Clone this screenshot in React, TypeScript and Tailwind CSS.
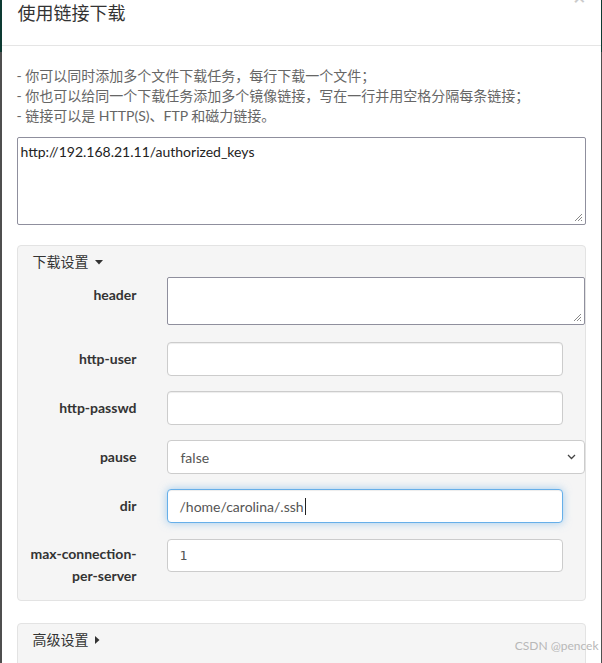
import React from "react";

const font = { fontFamily: "Lato, 'Noto Sans CJK SC', sans-serif" };

function Resize() {
  return (
    <svg width="9" height="9" viewBox="0 0 9 9" className="absolute bottom-[2px] right-[2px]">
      <path d="M8 1L1 8M8 4L4 8M8 7L7 8" stroke="#888" strokeWidth="1" />
    </svg>
  );
}

function Row({ label, children, pt = "pt-[7px]" }: { label: React.ReactNode; children: React.ReactNode; pt?: string }) {
  return (
    <div className="flex items-start">
      <label className={`w-[123px] shrink-0 pr-[15px] text-right text-[14px] font-bold leading-[20px] text-[#333] ${pt}`}>
        {label}
      </label>
      <div className="ml-[15px]">{children}</div>
    </div>
  );
}

const inputCls =
  "h-[34px] w-[396px] rounded-[4px] border border-[#ccc] bg-white px-[12px] text-[14px] text-[#555] shadow-[inset_0_1px_1px_rgba(0,0,0,0.075)] outline-none";

export default function App() {
  return (
    <div className="flex h-[663px] w-[602px] overflow-hidden bg-[#595959]" style={font}>
      <div className="flex w-[2px] flex-col">
        <div className="h-[52px] bg-[#0d3a32]" />
        <div className="flex-1 bg-[#4f4f4f]" />
      </div>

      <div className="relative flex-1 bg-white">
        <span className="absolute right-[15px] top-[-13px] text-[21px] font-bold leading-[20px] text-[#000] opacity-20">×</span>

        <div className="h-[46px] border-b border-[#e5e5e5] pl-[16px] pt-[1px]">
          <h4 className="text-[18px] leading-[24px] text-[#333]">使用链接下载</h4>
        </div>

        <div className="px-[15px] pt-[20px]">
          <div className="text-[14px] leading-[20px] text-[#666]">
            <p>- 你可以同时添加多个文件下载任务，每行下载一个文件；</p>
            <p>- 你也可以给同一个下载任务添加多个镜像链接，写在一行并用空格分隔每条链接；</p>
            <p>- 链接可以是 HTTP(S)、FTP 和磁力链接。</p>
          </div>

          <div className="relative mt-[11px] h-[88px] rounded-[2px] border border-[#8f8f9d] bg-white px-[3px] pt-[4px] text-[14px] leading-[20px] text-[#222]">
            http://192.168.21.11/authorized_keys
            <Resize />
          </div>

          <div className="mt-[20px] h-[356px] rounded-[4px] border border-[#e3e3e3] bg-[#f5f5f5] pl-[11px] pt-[6px]">
            <div className="flex items-center gap-[6px] pl-[4px] text-[14px] leading-[20px] text-[#333]">
              下载设置
              <svg width="8" height="5" viewBox="0 0 8 5">
                <path d="M0 0H8L4 4.5Z" fill="#333" />
              </svg>
            </div>

            <div className="mt-[5px] flex flex-col">
              <Row label="header" pt="pt-[8px]">
                <div className="relative h-[48px] w-[418px] rounded-[2px] border border-[#8f8f9d] bg-white">
                  <Resize />
                </div>
              </Row>
              <div className="mt-[17px]">
                <Row label="http-user">
                  <div className={inputCls} />
                </Row>
              </div>
              <div className="mt-[15px]">
                <Row label="http-passwd">
                  <div className={inputCls} />
                </Row>
              </div>
              <div className="mt-[15px]">
                <Row label="pause">
                  <div className="flex h-[34px] w-[418px] items-center justify-between rounded-[4px] border border-[#ccc] bg-white pl-[13px] pr-[8px] text-[14px] text-[#555]">
                    false
                    <svg width="9" height="6" viewBox="0 0 9 6">
                      <path d="M1 1L4.5 4.5L8 1" stroke="#444" strokeWidth="1.3" fill="none" />
                    </svg>
                  </div>
                </Row>
              </div>
              <div className="mt-[15px]">
                <Row label="dir">
                  <div className="flex h-[34px] w-[396px] items-center rounded-[4px] border border-[#66afe9] bg-white px-[12px] text-[14px] text-[#555] shadow-[inset_0_1px_1px_rgba(0,0,0,0.075),0_0_8px_rgba(102,175,233,0.6)]">
                    /home/carolina/.ssh
                    <span className="ml-[1px] h-[17px] w-px bg-[#222]" />
                  </div>
                </Row>
              </div>
              <div className="mt-[16px]">
                <Row
                  label={
                    <>
                      max-connection-
                      <br />
                      per-server
                    </>
                  }
                  pt="pt-[4px] leading-[22px]"
                >
                  <div className="flex h-[33px] w-[396px] items-center rounded-[4px] border border-[#ccc] bg-white px-[12px] text-[14px] text-[#555]">
                    <span style={{ fontFamily: "'DejaVu Sans Mono', monospace" }} className="text-[13px]">1</span>
                  </div>
                </Row>
              </div>
            </div>
          </div>

          <div className="mt-[22px] h-[60px] rounded-[4px] border border-[#e3e3e3] bg-[#f5f5f5] pl-[15px] pt-[6px]">
            <div className="flex items-center gap-[6px] text-[14px] leading-[20px] text-[#333]">
              高级设置
              <svg width="5" height="8" viewBox="0 0 5 8">
                <path d="M0 0V8L4.5 4Z" fill="#333" />
              </svg>
            </div>
          </div>
        </div>

        <span className="absolute bottom-[8px] right-[2px] text-[12px] text-[#b8b8b8]">CSDN @pencek</span>
      </div>

      <div className="flex w-[2px] flex-col">
        <div className="h-[52px] bg-[#0d3a32]" />
        <div className="flex-1 bg-[#4f4f4f]" />
      </div>
    </div>
  );
}
